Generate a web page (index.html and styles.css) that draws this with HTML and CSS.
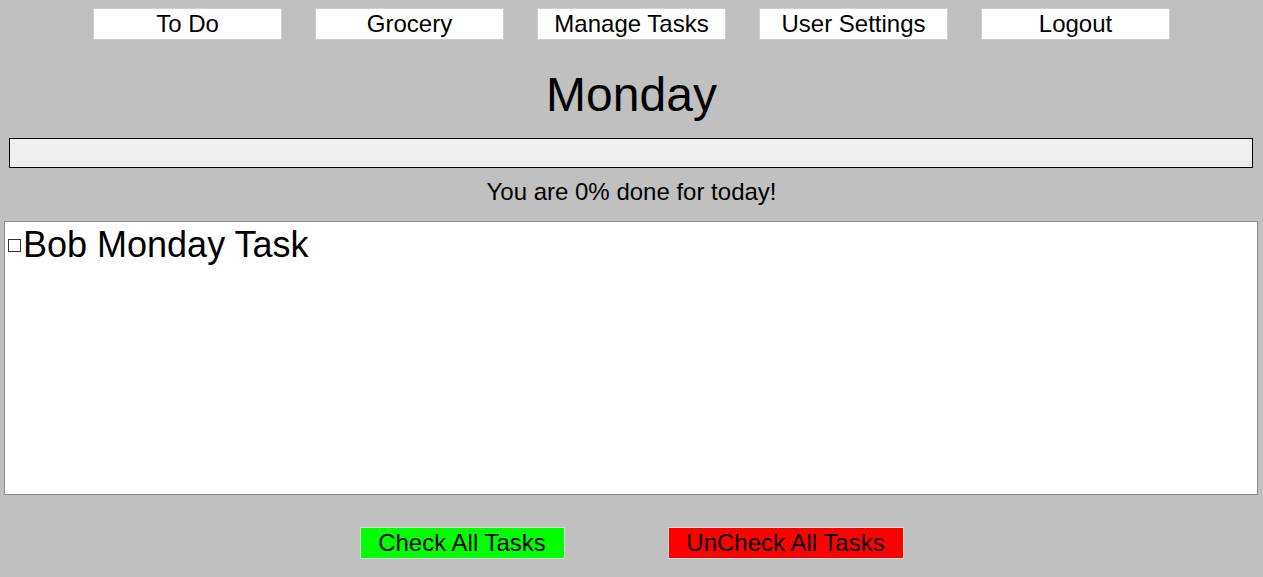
FILE: index.html
```html
<!DOCTYPE html>
<html>
<head>
<meta charset="utf-8">
<link rel="stylesheet" href="styles.css">
</head>
<body>
<nav class="nav">
  <a class="nav-btn">To Do</a>
  <a class="nav-btn">Grocery</a>
  <a class="nav-btn">Manage Tasks</a>
  <a class="nav-btn">User Settings</a>
  <a class="nav-btn">Logout</a>
</nav>
<h1 class="day">Monday</h1>
<div class="progress"><div class="progress-fill"></div></div>
<p class="status">You are 0% done for today!</p>
<div class="tasks">
  <label class="task"><input type="checkbox" class="chk"><span>Bob Monday Task</span></label>
</div>
<div class="actions">
  <button class="act check">Check All Tasks</button>
  <button class="act uncheck">UnCheck All Tasks</button>
</div>
</body>
</html>
```
FILE: styles.css
```css
html, body {
  margin: 0;
  padding: 0;
}
body {
  background: #c0c0c0;
  font-family: "Liberation Sans", Arial, sans-serif;
  color: #000;
  height: 577px;
  overflow: hidden;
}
.nav {
  display: flex;
  justify-content: center;
  gap: 33px;
  padding-top: 8px;
}
.nav-btn {
  display: flex;
  align-items: center;
  justify-content: center;
  width: 189px;
  height: 32px;
  box-sizing: border-box;
  background: #fff;
  border: 1px solid #cfcfcf;
  font-size: 24px;
  line-height: 1;
}
.day {
  margin: 0;
  height: 98px;
  padding-top: 10px;
  box-sizing: border-box;
  display: flex;
  align-items: center;
  justify-content: center;
  font-size: 48px;
  font-weight: normal;
}
.progress {
  margin: 0 10px 0 9px;
  height: 30px;
  box-sizing: border-box;
  border: 1px solid #000;
  background: #efefef;
}
.progress-fill {
  width: 0;
  height: 100%;
}
.status {
  margin: 0;
  height: 53px;
  display: flex;
  align-items: center;
  justify-content: center;
  font-size: 24px;
  padding-bottom: 6px;
  box-sizing: border-box;
}
.tasks {
  margin: 0 5px 0 4px;
  height: 274px;
  box-sizing: border-box;
  background: #fff;
  border: 1px solid #8e8e8e;
  padding-top: 5px;
}
.task {
  display: flex;
  align-items: center;
  font-size: 36px;
  line-height: 36px;
}
.chk {
  appearance: none;
  -webkit-appearance: none;
  width: 13px;
  height: 13px;
  box-sizing: border-box;
  border: 1px solid #333;
  background: #fff;
  margin: 0 2px 0 3px;
}
.actions {
  display: flex;
  justify-content: center;
  gap: 103px;
  padding-top: 32px;
}
.act {
  height: 32px;
  box-sizing: border-box;
  border: 1px solid #d8d8d8;
  font-family: "Liberation Sans", Arial, sans-serif;
  font-size: 24px;
  padding: 0;
  color: #000;
}
.check {
  width: 205px;
  background: #00ff00;
}
.uncheck {
  width: 236px;
  background: #ff0000;
}
```
